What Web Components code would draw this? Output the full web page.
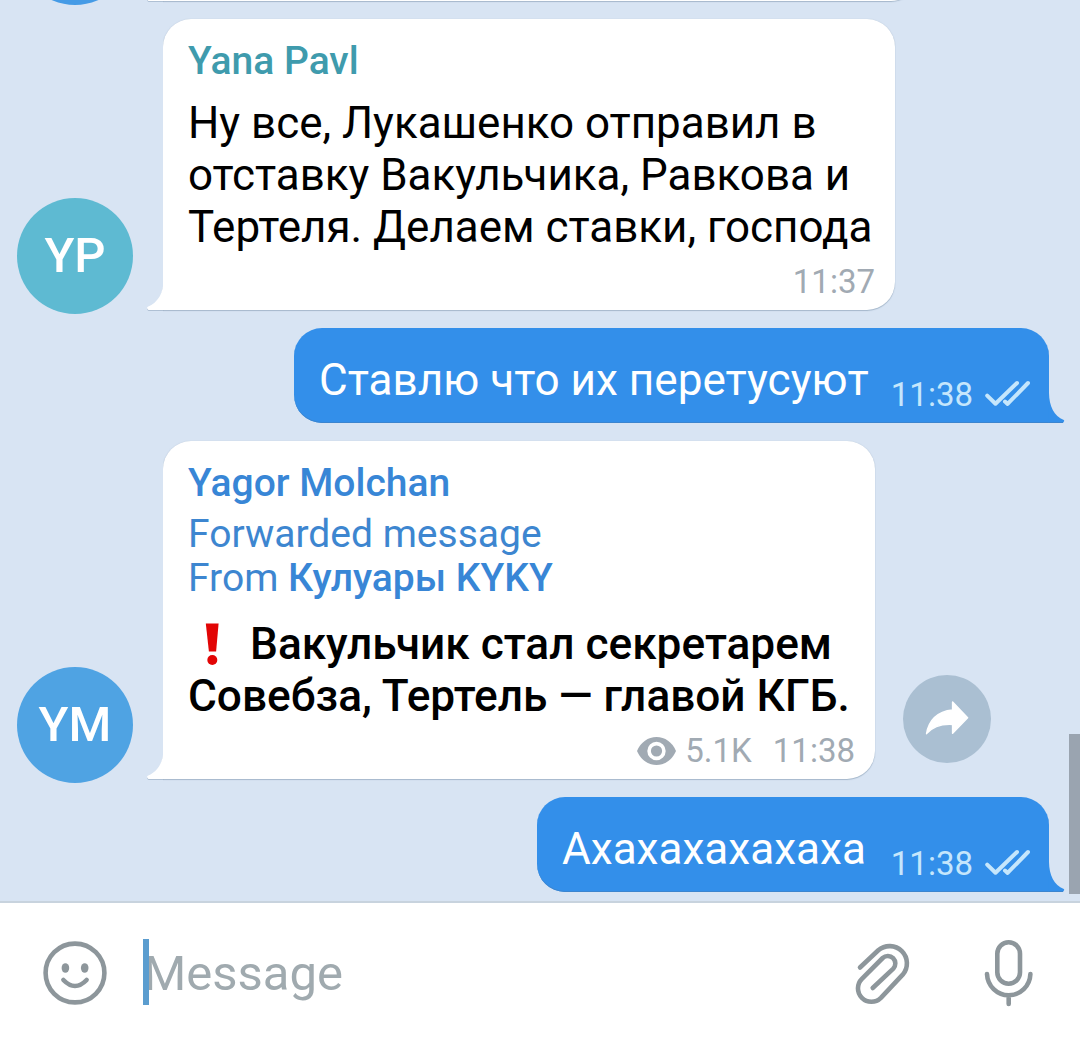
<!DOCTYPE html>
<html lang="ru">
<head>
<meta charset="utf-8">
<title>Chat</title>
<style>
  body {
    margin: 0;
    font-family: Roboto, "Noto Sans", sans-serif;
  }
</style>
</head>
<body>
<chat-screen>
  <chat-message initials="" color="#459be6" width="756" clipped></chat-message>

  <chat-message initials="YP" color="#5ebad2" width="732" time="11:37">
    <chat-author slot="head" color="#3f9bad">Yana Pavl</chat-author>
    Ну все, Лукашенко отправил в<br>отставку Вакульчика, Равкова и<br>Тертеля. Делаем ставки, господа
  </chat-message>

  <chat-message out width="755" time="11:38">Ставлю что их перетусуют</chat-message>

  <chat-message initials="YM" color="#4fa3e3" width="712" time="11:38" views="5.1K" share strong>
    <chat-author slot="head" color="#3886d6">Yagor Molchan</chat-author>
    <chat-forward slot="head">Кулуары KYKY</chat-forward>
    <mark-icon></mark-icon> Вакульчик стал секретарем<br>Совебза, Тертель — главой КГБ.
  </chat-message>

  <chat-message out width="512" time="11:38">Ахахахахахаха</chat-message>

  <chat-input slot="footer" placeholder="Message"></chat-input>
</chat-screen>

<script>
class ChatScreen extends HTMLElement {
  constructor() {
    super();
    this.attachShadow({ mode: "open" });
  }

  static get styles() {
    return `
    :host {
      display: flex;
      flex-direction: column;
      position: relative;
      height: 1039px;
      overflow: hidden;
      background: #d8e4f3;
    }

    .list {
      flex: 1;
      min-height: 0;
      display: flex;
      flex-direction: column;
      justify-content: flex-end;
      gap: 18px;
      padding-bottom: 9px;
    }

    .scrollbar {
      position: absolute;
      right: 0;
      top: 734px;
      width: 11px;
      height: 160px;
      background: #9aa4b0;
    }
  `;
  }

  connectedCallback() {
    this.shadowRoot.innerHTML = `
    <style>${ChatScreen.styles}</style>
    <div class="list"><slot></slot></div>
    <div class="scrollbar"></div>
    <slot name="footer"></slot>
  `;
  }
}

class ChatAuthor extends HTMLElement {
  constructor() {
    super();
    this.attachShadow({ mode: "open" });
  }

  connectedCallback() {
    this.shadowRoot.innerHTML = `
    <style>
      :host {
        display: block;
        font-size: 39px;
        font-weight: 500;
        line-height: 46px;
        color: ${this.getAttribute("color")};
      }
    </style>
    <slot></slot>
  `;
  }
}

class ChatForward extends HTMLElement {
  constructor() {
    super();
    this.attachShadow({ mode: "open" });
  }

  connectedCallback() {
    this.shadowRoot.innerHTML = `
    <style>
      :host {
        display: block;
        padding: 6px 0 5px;
        font-size: 39px;
        font-weight: 400;
        line-height: 44px;
        color: #3d86d0;
      }

      b {
        font-weight: 500;
        color: #3886d6;
      }
    </style>
    <div>Forwarded message</div>
    <div>From <b><slot></slot></b></div>
  `;
  }
}

class MarkIcon extends HTMLElement {
  constructor() {
    super();
    this.attachShadow({ mode: "open" });
  }

  connectedCallback() {
    this.shadowRoot.innerHTML = `
    <style>
      :host {
        display: inline-block;
        width: 51px;
        height: 44px;
        vertical-align: -7px;
      }

      svg {
        display: block;
      }
    </style>
    <svg width="51" height="44" fill="#e20505">
      <path d="M17.800 1.400h12.800l-2.500 28.200h-7.200z"/>
      <circle cx="24.300" cy="38" r="5"/>
    </svg>
  `;
  }
}

class ChatMessage extends HTMLElement {
  constructor() {
    super();
    this.attachShadow({ mode: "open" });
  }

  static get styles() {
    return `
    :host {
      display: flex;
      flex: none;
      align-items: flex-end;
      padding-left: 17px;
    }

    :host([out]) {
      justify-content: flex-end;
      padding: 0 16px 0 0;
    }

    .avatar {
      flex: none;
      width: 116px;
      height: 116px;
      margin: 0 14px -4px 0;
      border-radius: 50%;
      color: #fff;
      font-size: 49px;
      font-weight: 500;
      line-height: 116px;
      text-align: center;
    }

    .tail {
      flex: none;
      display: block;
      width: 16px;
      height: 30px;
      fill: #fff;
      overflow: visible;
      filter: drop-shadow(0 1px 0.5px #8fa5bb90);
    }

    .bubble {
      box-sizing: border-box;
      flex: none;
      padding: 19px 20px 8px 25px;
      border-radius: 28px 28px 28px 0;
      background: #fff;
      box-shadow: 0 1px 1px #8fa5bbb0, 0 0 1px #8fa5bb90;
      clip-path: inset(-3px -3px -3px 0);
    }

    .text {
      margin-top: 13px;
      color: #000;
      font-size: 43.95px;
      line-height: 52px;
      white-space: nowrap;
    }

    :host([strong]) .text {
      font-size: 44.2px;
      font-weight: 500;
    }

    .info {
      display: flex;
      justify-content: flex-end;
      align-items: center;
      height: 40px;
      margin-top: 9px;
      color: #a1aab3;
      font-size: 33px;
      line-height: 40px;
    }

    .info svg {
      display: block;
    }

    .views {
      margin: 0 21px 0 9px;
    }

    :host([out]) .bubble {
      display: flex;
      justify-content: space-between;
      align-items: flex-end;
      height: 95px;
      padding: 0 19px 8px 25px;
      border-radius: 28px 28px 0 28px;
      background: #338fea;
      box-shadow: 0 -1px 0 #3c85cf inset;
      clip-path: none;
    }

    :host([out]) .tail {
      width: 15px;
      fill: #338fea;
      filter: none;
    }

    :host([out]) .text {
      margin: 0 0 9px;
      color: #fff;
      font-size: 44.1px;
    }

    :host([out]) .info {
      margin: 0;
      gap: 11px;
      color: #c5e6fc;
    }

    .share {
      flex: none;
      display: flex;
      width: 88px;
      height: 88px;
      margin: 0 0 16px 28px;
      border-radius: 50%;
      background: #aabfd2;
    }

    :host([clipped]) .bubble {
      height: 60px;
    }
  `;
  }

  connectedCallback() {
    this.render();
  }

  get checks() {
    return `
    <svg width="46" height="40" fill="none" stroke="#c5e6fc" stroke-width="4" stroke-linecap="round" stroke-linejoin="round">
      <path d="M3.200 20.600l8.300 8.100L33 8M21 26.600l2.600 2.300L44 8"/>
    </svg>`;
  }

  get eye() {
    return `
    <svg width="39" height="28" viewBox="0 0 39 28">
      <path d="M0 14C3.800 5.200 11 0 19.500 0S35.200 5.200 39 14C35.200 22.800 28 28 19.500 28S3.800 22.800 0 14z" fill="#a1aab3"/>
      <circle cx="19.500" cy="14" r="7.400" fill="none" stroke="#fff" stroke-width="3.600"/>
    </svg>`;
  }

  get share() {
    return `
    <div class="share">
      <svg width="88" height="88" fill="#fff" stroke="#fff" stroke-width="1.500" stroke-linejoin="round">
        <path d="M49.600 27L64.600 42.800L49.600 58.200V49.400C37.500 48.600 29.400 52 23.600 58.600C25.600 46 33.800 36.200 49.600 34.900z"/>
      </svg>
    </div>`;
  }

  render() {
    const out = this.hasAttribute("out");
    const views = this.getAttribute("views");
    const time = this.getAttribute("time") || "";
    const avatar = `<div class="avatar" style="background:${this.getAttribute("color")}">${this.getAttribute("initials")}</div>`;
    const leftTail = `<svg class="tail"><path d="M16.500 0C16.500 13 11 22.500 0.800 26.800Q-1 28 1.500 30H16.500z"/></svg>`;
    const rightTail = `
    <svg class="tail">
      <path d="M-.5 0H0C.2 13 5 23 14.800 27Q16 28 13.600 30H-.5z"/>
      <path d="M-.5 29H14.500L13.600 30H-.5z" fill="#3c85cf"/>
    </svg>`;
    this.shadowRoot.innerHTML = `
    <style>${ChatMessage.styles}</style>
    ${out ? "" : avatar + leftTail}
    <div class="bubble" style="width:${this.getAttribute("width")}px">
      <slot name="head"></slot>
      <div class="text"><slot></slot></div>
      <div class="info">
        ${views ? `${this.eye}<span class="views">${views}</span>` : ""}
        <span>${time}</span>
        ${out ? this.checks : ""}
      </div>
    </div>
    ${out ? rightTail : ""}
    ${this.hasAttribute("share") ? this.share : ""}
  `;
  }
}

class ChatInput extends HTMLElement {
  constructor() {
    super();
    this.attachShadow({ mode: "open" });
  }

  static get styles() {
    return `
    :host {
      flex: none;
      display: flex;
      align-items: center;
      box-sizing: border-box;
      height: 138px;
      padding: 4px 44px 0 40px;
      border-top: 2px solid #c8d3de;
      background: #fff;
    }

    svg {
      flex: none;
      fill: none;
      stroke: #8d969b;
      stroke-width: 4.6;
      stroke-linecap: round;
      stroke-linejoin: round;
    }

    .field {
      flex: 1;
      display: flex;
      align-items: center;
      height: 66px;
      margin: 0 0 2px 33px;
      color: #a0aaaf;
      font-size: 49px;
      line-height: 66px;
    }

    .hint {
      padding: 4px 0 0 0.5px;
    }

    .caret {
      width: 6px;
      height: 66px;
      margin-right: -6px;
      background: #5b9dcf;
      z-index: 1;
    }

    .clip {
      margin-right: 64px;
    }
  `;
  }

  connectedCallback() {
    this.shadowRoot.innerHTML = `
    <style>${ChatInput.styles}</style>
    <svg width="70" height="70">
      <circle cx="35" cy="35" r="29.400"/>
      <path d="M23.400 42Q35 54 46.600 42"/>
      <g fill="#8d969b" stroke="none">
        <ellipse cx="25.400" cy="30" rx="3.800" ry="4.800"/>
        <ellipse cx="44.700" cy="30" rx="3.800" ry="4.800"/>
      </g>
    </svg>
    <div class="field"><span class="caret"></span><span class="hint">${this.getAttribute("placeholder")}</span></div>
    <svg class="clip" width="64" height="70">
      <path d="M8 29.500L26.300 12.300A17.300 17.300 0 0 1 50.700 36.700L28.900 59.800A13.400 13.400 0 0 1 9.900 40.800L30.700 20A7.500 7.500 0 0 1 41.300 30.600L20.700 50"/>
    </svg>
    <svg width="56" height="74">
      <rect x="17.300" y="6.300" width="22.700" height="41.400" rx="11.350"/>
      <path d="M7 38C7.500 50 17 59.300 28.700 59.300S50 50 50.400 38M28.700 59.300V68"/>
    </svg>
  `;
  }
}

customElements.define("chat-screen", ChatScreen);
customElements.define("chat-author", ChatAuthor);
customElements.define("chat-forward", ChatForward);
customElements.define("mark-icon", MarkIcon);
customElements.define("chat-message", ChatMessage);
customElements.define("chat-input", ChatInput);
</script>
</body>
</html>
